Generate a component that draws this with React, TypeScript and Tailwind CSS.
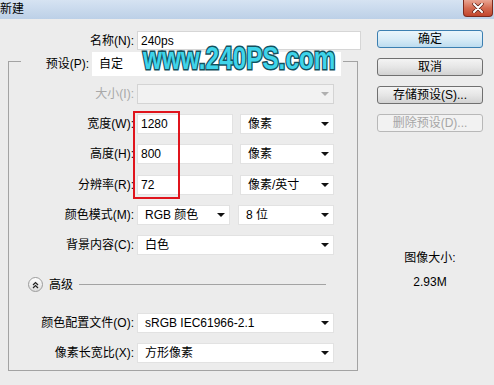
import React from 'react';

const font = 'font-["Liberation_Sans","Noto_Sans_CJK_SC",sans-serif]';

function Arrow({ disabled }: { disabled?: boolean }) {
  return (
    <span
      className={`w-0 h-0 border-l-[4px] border-r-[4px] border-t-[4px] border-l-transparent border-r-transparent ${
        disabled ? 'border-t-[#b0b0b0]' : 'border-t-[#111]'
      }`}
    />
  );
}

function Select({ value, width, disabled }: { value?: string; width: string; disabled?: boolean }) {
  return (
    <div
      className={`${width} h-[20px] flex items-center justify-between pl-[7px] pr-[4px] border ${
        disabled ? 'bg-[#f2f2f2] border-[#d4d4d4]' : 'bg-white border-[#e2e2e2]'
      }`}
    >
      <span className="leading-none">{value}</span>
      <Arrow disabled={disabled} />
    </div>
  );
}

function Input({ value, width }: { value: string; width: string }) {
  return (
    <div className={`${width} h-[20px] flex items-center pl-[3px] bg-white border border-[#e2e2e2]`}>
      <span className="leading-none">{value}</span>
    </div>
  );
}

function Row({ label, mt, disabled, children }: { label: string; mt: string; disabled?: boolean; children: React.ReactNode }) {
  return (
    <div className={`flex items-center ${mt}`}>
      <span className={`w-[125px] text-right leading-none ${disabled ? 'text-[#a8a8a8]' : ''}`}>{label}</span>
      <div className="ml-[3px] flex items-center">{children}</div>
    </div>
  );
}

function Button({ label, primary, disabled }: { label: string; primary?: boolean; disabled?: boolean }) {
  let look = 'border-[#707070] bg-gradient-to-b from-[#f4f4f4] via-[#e6e6e6] to-[#d2d2d2] text-black';
  if (primary) look = 'border-[#3c7fb1] bg-gradient-to-b from-[#eaf5fb] via-[#d9ecf7] to-[#bddcef] text-black';
  if (disabled) look = 'border-[#b8b8b8] bg-[#f2f2f2] text-[#a6a6a6]';
  return (
    <div className={`w-[106px] h-[18px] flex items-center justify-center border rounded-[3px] leading-none ${look}`}>
      {label}
    </div>
  );
}

export default function App() {
  return (
    <div className={`relative w-[494px] h-[385px] overflow-hidden bg-[#ececec] text-[12px] text-black ${font}`}>
      {/* Title bar */}
      <div className="h-[19px] flex items-start justify-between bg-gradient-to-b from-[#d6e3f2] to-[#bcd0e7]">
        <span className="mt-[3px] leading-none">新建</span>
        <div className="mr-[1px] w-[30px] h-[17px] flex items-center justify-center rounded-b-[4px] border border-t-0 border-[#7b2a1e] bg-gradient-to-b from-[#e9a593] via-[#d46b52] to-[#c2452c]">
          <svg width="12" height="10" viewBox="0 0 12 10">
            <path d="M2 1 L10 9 M10 1 L2 9" stroke="#5a1d14" strokeWidth="3.4" strokeLinecap="round" />
            <path d="M2 1 L10 9 M10 1 L2 9" stroke="#fff" strokeWidth="2" strokeLinecap="round" />
          </svg>
        </div>
      </div>

      <div className="flex">
        {/* Left column */}
        <div className="w-[361px] flex flex-col">
          <div className="flex items-center mt-[12px]">
            <span className="w-[134px] text-right leading-none">名称(N):</span>
            <div className="ml-[3px] w-[224px] h-[19px] flex items-center pl-[3px] bg-white border border-[#d6d6d6]">
              <span className="leading-none">240ps</span>
            </div>
          </div>

          {/* Group box */}
          <div className="ml-[8px] w-[350px] mt-[2px] flex flex-col">
            <div className="h-[24px] flex items-start">
              <div className="w-[13px] h-[15px] mt-[9px] border-t border-l border-[#a3a3a3]" />
              <div className="w-[322px] flex items-center">
                <span className="w-[68px] text-right leading-none">预设(P):</span>
                <div className="ml-[3px] w-[249px] h-[24px] flex items-center pl-[7px] bg-white">
                  <span className="leading-none">自定</span>
                </div>
              </div>
              <div className="flex-1 h-[15px] mt-[9px] border-t border-r border-[#a3a3a3]" />
            </div>

            <div className="flex flex-col border-l border-r border-b border-[#a3a3a3] pb-[7px]">
              <Row label="大小(I):" mt="mt-[8px]" disabled>
                <Select width="w-[197px]" disabled />
              </Row>
              <Row label="宽度(W):" mt="mt-[10px]">
                <Input value="1280" width="w-[96px]" />
                <div className="ml-[7px]"><Select value="像素" width="w-[94px]" /></div>
              </Row>
              <Row label="高度(H):" mt="mt-[10px]">
                <Input value="800" width="w-[96px]" />
                <div className="ml-[7px]"><Select value="像素" width="w-[94px]" /></div>
              </Row>
              <Row label="分辨率(R):" mt="mt-[11px]">
                <Input value="72" width="w-[96px]" />
                <div className="ml-[7px]"><Select value="像素/英寸" width="w-[94px]" /></div>
              </Row>
              <Row label="颜色模式(M):" mt="mt-[10px]">
                <Select value="RGB 颜色" width="w-[93px]" />
                <div className="ml-[8px]"><Select value="8 位" width="w-[96px]" /></div>
              </Row>
              <Row label="背景内容(C):" mt="mt-[10px]">
                <Select value="白色" width="w-[197px]" />
              </Row>

              {/* Advanced */}
              <div className="flex items-center mt-[22px] h-[15px]">
                <div className="ml-[19px] w-[15px] h-[15px] rounded-full border border-[#9c9c9c] bg-gradient-to-b from-white to-[#dcdcdc] flex items-center justify-center">
                  <svg width="7" height="8" viewBox="0 0 7 8">
                    <path d="M1 4 L3.5 1.5 L6 4 M1 7 L3.5 4.5 L6 7" fill="none" stroke="#222" strokeWidth="1.2" />
                  </svg>
                </div>
                <span className="ml-[6px] leading-none">高级</span>
                <div className="flex-1 ml-[6px] mr-[31px] border-t border-[#a3a3a3]" />
              </div>

              <Row label="颜色配置文件(O):" mt="mt-[21px]">
                <Select value="sRGB IEC61966-2.1" width="w-[197px]" />
              </Row>
              <Row label="像素长宽比(X):" mt="mt-[10px]">
                <Select value="方形像素" width="w-[197px]" />
              </Row>
            </div>
          </div>
        </div>

        {/* Right column */}
        <div className="ml-[16px] w-[106px] flex flex-col items-center pt-[11px]">
          <Button label="确定" primary />
          <div className="mt-[10px]"><Button label="取消" /></div>
          <div className="mt-[10px]"><Button label="存储预设(S)..." /></div>
          <div className="mt-[10px]"><Button label="删除预设(D)..." disabled /></div>
          <span className="mt-[119px] leading-[14px]">图像大小:</span>
          <span className="mt-[10px] leading-[14px]">2.93M</span>
        </div>
      </div>

      {/* Watermark overlay */}
      <div className="absolute left-[143px] top-[42px] origin-left scale-x-[0.76] text-[32px] leading-none font-bold text-[#3fd4ea] [-webkit-text-stroke:3px_#14505c] [paint-order:stroke_fill] whitespace-nowrap font-['Liberation_Sans',sans-serif]">
        www.240PS.com
      </div>

      {/* Red highlight frame */}
      <div className="absolute left-[133px] top-[111px] w-[47px] h-[88px] border-2 border-[#e0141c]" />
    </div>
  );
}
